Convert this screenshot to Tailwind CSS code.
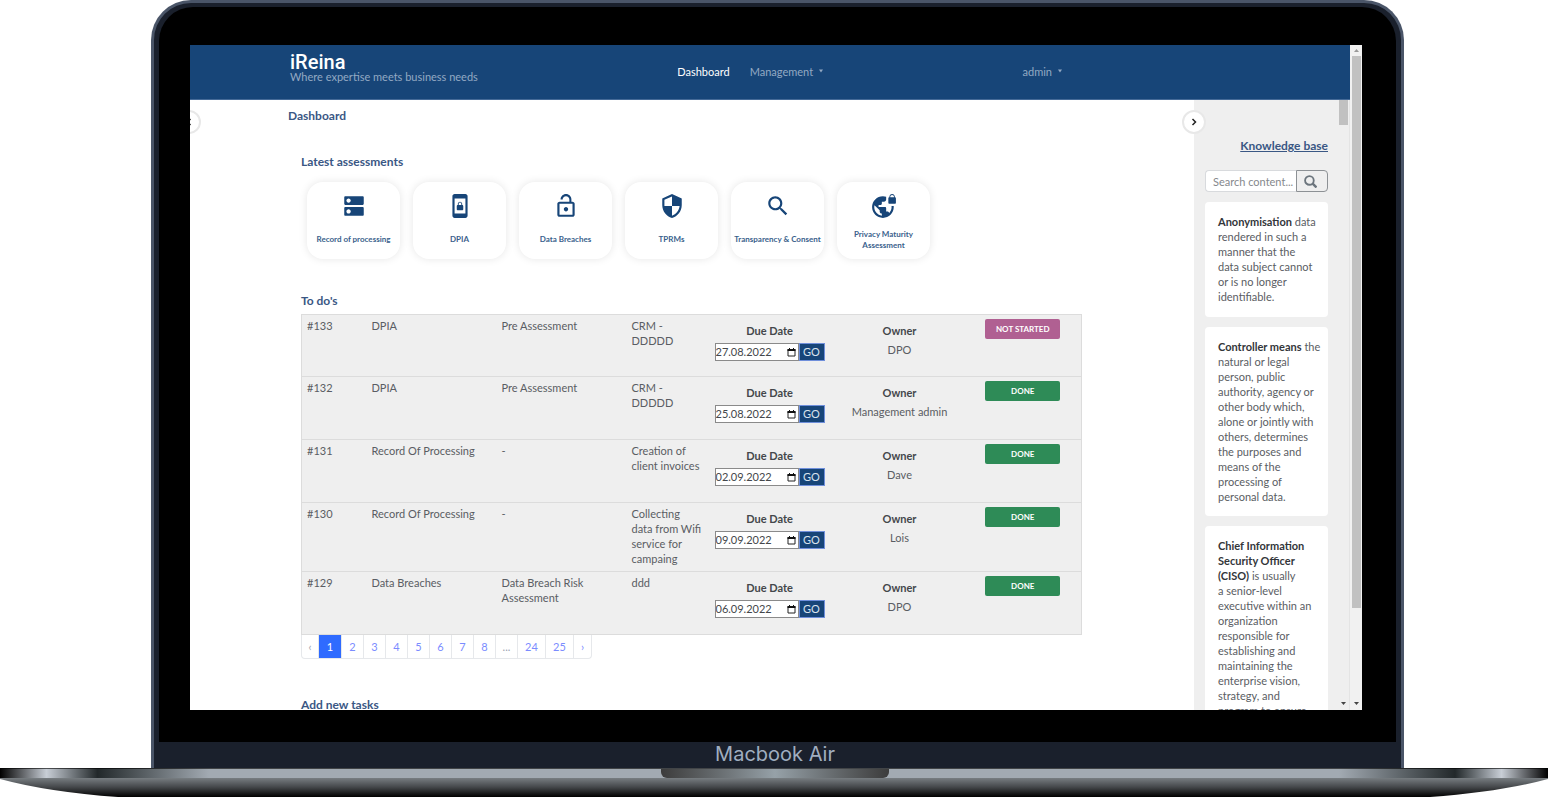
<!DOCTYPE html>
<html lang="en">
<head>
  <meta charset="UTF-8" />
  <meta name="viewport" content="width=device-width, initial-scale=1.0" />
  <title>iReina - Dashboard</title>
  <script src="https://cdn.jsdelivr.net/npm/@tailwindcss/browser@4"></script>
</head>
<body class="h-screen flex flex-col bg-white overflow-hidden font-['Lato',sans-serif] text-[11px] leading-[15px] text-[#5a5d63]">

  <!-- Laptop lid -->
  <div class="flex-1 min-h-0 ml-[151px] mr-[144px] flex flex-col rounded-t-[40px] border-t-3 border-x-3 border-[#4a5568] bg-[#1a202c] overflow-hidden">
    <div class="flex-1 min-h-0 mt-1 mx-[5px] pt-[38px] pb-8 pl-[31px] pr-[34px] flex bg-black rounded-t-[34px]">

      <!-- Screen -->
      <div class="relative flex-1 min-w-0 flex bg-white overflow-hidden">
        <div class="flex-1 min-w-0 flex flex-col">

          <nav class="h-[55px] shrink-0 flex items-center justify-between pl-[100px] pr-[288px] bg-[#174578] border-b border-[#456a97] text-[#93a9c3]">
            <a href="#" class="block pb-2">
              <span class="block font-['Roboto',sans-serif] font-medium text-[20px] leading-[18px] text-white">iReina</span>
              <span class="block leading-3">Where expertise meets business needs</span>
            </a>
            <div class="flex gap-5 pb-0.5">
              <a href="#" class="text-white">Dashboard</a>
              <a href="#" class="flex items-center gap-1.5">Management
                <svg class="w-1 h-1" viewBox="0 0 4 4" fill="currentColor"><path d="M0 0.5h4L2 3.5z"/></svg>
              </a>
            </div>
            <a href="#" class="flex items-center gap-1.5 pb-0.5">admin
              <svg class="w-1 h-1" viewBox="0 0 4 4" fill="currentColor"><path d="M0 0.5h4L2 3.5z"/></svg>
            </a>
          </nav>

          <div class="flex-1 min-h-0 flex">

            <!-- Main column -->
            <main class="relative flex-1 min-w-0 pl-[111px] pr-28 pt-2">
              <button aria-label="Open left panel" class="absolute -left-[13px] top-[10px] size-6 rounded-full border-2 border-[#e8e8e8] bg-white flex items-center justify-center">
                <svg class="w-2 h-2" viewBox="0 0 8 8" fill="none" stroke="#222" stroke-width="1.5"><path d="M5.500 1L2.500 4L5.500 7"/></svg>
              </button>
              <button aria-label="Close right panel" class="absolute -right-3 top-[10px] z-10 size-6 rounded-full border-2 border-[#e8e8e8] bg-white flex items-center justify-center">
                <svg class="w-2 h-2" viewBox="0 0 8 8" fill="none" stroke="#222" stroke-width="1.5"><path d="M2.500 1L5.500 4L2.500 7"/></svg>
              </button>

              <h1 class="-ml-[13px] font-bold text-xs leading-4 text-[#3a5784]">Dashboard</h1>

              <h2 class="mt-[30px] font-bold text-xs leading-4 text-[#3a5784]">Latest assessments</h2>
              <div id="assessments" class="mt-3 ml-1.5 flex gap-[13px]"></div>

              <h2 class="mt-[34px] font-bold text-xs leading-4 text-[#3a5784]">To do's</h2>
              <table class="mt-[5px] w-full table-fixed border-collapse border border-[#dcdcdc] bg-[#efefef]">
                <colgroup>
                  <col class="w-[65px]" />
                  <col class="w-[130px]" />
                  <col class="w-[130px]" />
                  <col class="w-[78px]" />
                  <col class="w-[130px]" />
                  <col class="w-[130px]" />
                  <col />
                </colgroup>
                <tbody id="todos"></tbody>
              </table>

              <div class="flex w-fit h-6 border border-t-0 border-[#e6e8eb] rounded-b-sm divide-x divide-[#e6e8eb] text-[#7b8cff]">
                <a href="#" class="w-[17px] flex items-center justify-center text-gray-400">‹</a>
                <a href="#" class="w-[23px] flex items-center justify-center bg-[#2f6bff] text-white">1</a>
                <a href="#" class="w-[22px] flex items-center justify-center">2</a>
                <a href="#" class="w-[22px] flex items-center justify-center">3</a>
                <a href="#" class="w-[22px] flex items-center justify-center">4</a>
                <a href="#" class="w-[22px] flex items-center justify-center">5</a>
                <a href="#" class="w-[22px] flex items-center justify-center">6</a>
                <a href="#" class="w-[22px] flex items-center justify-center">7</a>
                <a href="#" class="w-[22px] flex items-center justify-center">8</a>
                <span class="w-[22px] flex items-center justify-center text-gray-400">...</span>
                <a href="#" class="w-7 flex items-center justify-center">24</a>
                <a href="#" class="w-7 flex items-center justify-center">25</a>
                <a href="#" class="w-[17px] flex items-center justify-center">›</a>
              </div>

              <h2 class="mt-[38px] font-bold text-xs leading-4 text-[#3a5784]">Add new tasks</h2>
            </main>

            <!-- Knowledge base -->
            <aside class="w-[156px] shrink-0 flex bg-[#efefef]">
              <div class="flex-1 min-w-0 pl-[11px] pr-2.5 overflow-hidden whitespace-nowrap">
                <div class="pt-[38px] text-right">
                  <a href="#" class="font-bold text-xs leading-4 text-[#3a5784] underline">Knowledge base</a>
                </div>
                <form class="mt-4 h-[22px] flex">
                  <input type="text" aria-label="Search content" placeholder="Search content..." class="flex-1 min-w-0 pl-[7px] bg-white border border-[#d8dadd] border-r-0 rounded-l-sm placeholder:text-[#85888c]" />
                  <button type="button" aria-label="Search" class="w-8 pr-1 flex items-center justify-center border border-[#8d9195] rounded-r-[4px]">
                    <svg class="w-[13px] h-[13px]" viewBox="0 0 12 12" fill="none" stroke="#6c757d"><circle cx="5" cy="5" r="4" stroke-width="1.700"/><path d="M8 8l3.500 3.500" stroke-width="2.200"/></svg>
                  </button>
                </form>
                <div class="mt-2.5 flex flex-col gap-2.5">
                  <p class="px-[13px] pt-3 pb-[13px] bg-white rounded-sm">
                    <b class="text-[#33363a]">Anonymisation</b> data<br />rendered in such a<br />manner that the<br />data subject cannot<br />or is no longer<br />identifiable.
                  </p>
                  <p class="px-[13px] py-3 bg-white rounded-sm">
                    <b class="text-[#33363a]">Controller means</b> the<br />natural or legal<br />person, public<br />authority, agency or<br />other body which,<br />alone or jointly with<br />others, determines<br />the purposes and<br />means of the<br />processing of<br />personal data.
                  </p>
                  <p class="px-[13px] py-3 bg-white rounded-sm">
                    <b class="text-[#33363a]">Chief Information<br />Security Officer<br />(CISO)</b> is usually<br />a senior-level<br />executive within an<br />organization<br />responsible for<br />establishing and<br />maintaining the<br />enterprise vision,<br />strategy, and<br />program to ensure
                  </p>
                </div>
              </div>
              <div class="w-3 shrink-0 flex flex-col items-center justify-between border-r border-[#e4e4e4]">
                <div class="w-[9px] h-[25px] bg-[#c1c1c1]"></div>
                <svg class="w-[5px] h-3" viewBox="0 0 5 12" fill="#444"><path d="M0 4h5L2.500 7z"/></svg>
              </div>
            </aside>
          </div>
        </div>

        <!-- Window scrollbar -->
        <div class="w-3 shrink-0 flex flex-col items-center bg-[#f1f1f1]">
          <svg class="w-[5px] h-[11px]" viewBox="0 0 5 11" fill="#999"><path d="M0 7h5L2.500 4z"/></svg>
          <div class="w-[9px] h-[83%] bg-[#c1c1c1]"></div>
          <svg class="mt-auto w-[5px] h-3" viewBox="0 0 5 12" fill="#444"><path d="M0 4h5L2.500 7z"/></svg>
        </div>
      </div>
    </div>
    <div class="h-[26px] shrink-0 pr-[5px] text-center font-['Inter',sans-serif] text-xl leading-6 text-[#a0aec0]">Macbook Air</div>
  </div>

  <!-- Laptop base -->
  <div class="relative h-[29px] mb-[5px] shrink-0">
    <svg class="w-full h-full" viewBox="0 0 1548 29" preserveAspectRatio="none">
      <defs>
        <linearGradient id="edge">
          <stop offset="0" stop-color="#000"/>
          <stop offset="0.03" stop-color="#c8ced6"/>
          <stop offset="0.063" stop-color="#22282a"/>
          <stop offset="0.135" stop-color="#a2aab2"/>
          <stop offset="0.865" stop-color="#a2aab2"/>
          <stop offset="0.94" stop-color="#22282a"/>
          <stop offset="0.97" stop-color="#c8ced6"/>
          <stop offset="1" stop-color="#000"/>
        </linearGradient>
        <linearGradient id="under" x1="0" y1="0" x2="0" y2="1">
          <stop offset="0" stop-color="#7d8387"/>
          <stop offset="0.5" stop-color="#45484b"/>
          <stop offset="1" stop-color="#000"/>
        </linearGradient>
      </defs>
      <path d="M0 9H1548V11Q1500 24 1430 29H118Q48 24 0 11Z" fill="url(#under)"/>
      <rect width="1548" height="10" fill="url(#edge)"/>
      <rect width="1548" height="1" fill="#000" fill-opacity="0.600"/>
    </svg>
    <div class="absolute top-px left-[661px] right-[659px] h-[9px] rounded-b-md bg-linear-to-r from-[#3c3c3c] via-[#96a1a8] to-[#3c3c3c]"></div>
  </div>

  <script>
    const assessments = [
      ["Record of processing", "M20 13H4c-.55 0-1 .45-1 1v6c0 .55.45 1 1 1h16c.55 0 1-.45 1-1v-6c0-.55-.45-1-1-1zM7 19c-1.100 0-2-.9-2-2s.9-2 2-2 2 .9 2 2-.9 2-2 2zM20 3H4c-.55 0-1 .45-1 1v6c0 .55.45 1 1 1h16c.55 0 1-.45 1-1V4c0-.55-.45-1-1-1zM7 9c-1.100 0-2-.9-2-2s.9-2 2-2 2 .9 2 2-.9 2-2 2z"],
      ["DPIA", "M10 16h4c.55 0 1-.45 1-1v-3c0-.55-.45-1-1-1v-1c0-1.110-.9-2-2-2-1.110 0-2 .9-2 2v1c-.55 0-1 .45-1 1v3c0 .55.45 1 1 1zm.8-6c0-.66.54-1.200 1.200-1.200.66 0 1.200.54 1.200 1.200v1h-2.400v-1zM17 1H7c-1.100 0-2 .9-2 2v18c0 1.100.9 2 2 2h10c1.100 0 2-.9 2-2V3c0-1.100-.9-2-2-2zm0 18H7V5h10v14z"],
      ["Data Breaches", "M12 17c1.100 0 2-.9 2-2s-.9-2-2-2-2 .9-2 2 .9 2 2 2zm6-9h-1V6c0-2.760-2.240-5-5-5S7 3.240 7 6h1.900c0-1.710 1.390-3.100 3.100-3.100 1.710 0 3.100 1.390 3.100 3.100v2H6c-1.100 0-2 .9-2 2v10c0 1.100.9 2 2 2h12c1.100 0 2-.9 2-2V10c0-1.100-.9-2-2-2zm0 12H6V10h12v10z"],
      ["TPRMs", "M12 1L3 5v6c0 5.550 3.840 10.740 9 12 5.160-1.260 9-6.450 9-12V5l-9-4zm0 10.990h7c-.53 4.120-3.280 7.790-7 8.940V12H5V6.300l7-3.110v8.800z"],
      ["Transparency & Consent", "M15.500 14h-.79l-.28-.27C15.410 12.590 16 11.110 16 9.500 16 5.910 13.090 3 9.500 3S3 5.910 3 9.500 5.910 16 9.500 16c1.610 0 3.090-.59 4.230-1.570l.27.28v.79l5 4.990L20.490 19l-4.990-5zm-6 0C7.010 14 5 11.990 5 9.500S7.010 5 9.500 5 14 7.010 14 9.500 11.990 14 9.500 14z"],
      ["Privacy Maturity<br>Assessment", "M22 4v-.5C22 2.120 20.880 1 19.500 1S17 2.120 17 3.500V4c-.55 0-1 .45-1 1v4c0 .55.45 1 1 1h5c.55 0 1-.45 1-1V5c0-.55-.45-1-1-1zm-.8 0h-3.400v-.5c0-.94.76-1.700 1.700-1.700s1.700.76 1.700 1.700V4zm-2.280 8c.04.33.08.66.08 1 0 2.080-.8 3.970-2.100 5.390-.26-.81-1-1.390-1.900-1.390h-1v-3c0-.55-.45-1-1-1H7v-2h2c.55 0 1-.45 1-1V8h2c1.100 0 2-.9 2-2V3.460c-.95-.3-1.950-.46-3-.46C5.480 3 1 7.480 1 13s4.480 10 10 10 10-4.480 10-10c0-.34-.02-.67-.05-1h-2.030zM10 20.930c-3.950-.49-7-3.850-7-7.930 0-.62.08-1.210.21-1.790L8 16v1c0 1.100.9 2 2 2v1.930z"]
    ];

    const todos = [
      ["133", "DPIA", "Pre Assessment", "CRM -<br>DDDDD", "27.08.2022", "DPO", "NOT STARTED"],
      ["132", "DPIA", "Pre Assessment", "CRM -<br>DDDDD", "25.08.2022", "Management admin", "DONE"],
      ["131", "Record Of Processing", "-", "Creation of<br>client invoices", "02.09.2022", "Dave", "DONE"],
      ["130", "Record Of Processing", "-", "Collecting<br>data from Wifi<br>service for<br>campaing", "09.09.2022", "Lois", "DONE"],
      ["129", "Data Breaches", "Data Breach Risk<br>Assessment", "ddd", "06.09.2022", "DPO", "DONE"]
    ];

    document.getElementById("assessments").innerHTML = assessments.map(([label, icon]) => `
      <a href="#" class="w-[93px] h-[77px] pt-[11px] flex flex-col items-center rounded-2xl bg-white shadow-[0_0_8px_rgba(0,0,0,0.1)] text-[#3a5f8c]">
        <svg class="size-[26px] shrink-0" viewBox="0 0 24 24" fill="#174578"><path d="${icon}"/></svg>
        <span class="mt-px h-11 flex items-center text-center text-[8px] leading-[11px] font-bold whitespace-nowrap">${label}</span>
      </a>`).join("");

    document.getElementById("todos").innerHTML = todos.map(([id, type, stage, name, date, owner, status]) => `
      <tr class="h-[63px] first:h-[62px] align-top border-b border-[#dcdcdc]">
        <td class="pl-[5px] pt-[3px] pb-[5px]">#${id}</td>
        <td class="pl-[5px] pt-[3px] pb-[5px]">${type}</td>
        <td class="pl-[5px] pt-[3px] pb-[5px]">${stage}</td>
        <td class="pl-[5px] pt-[3px] pb-[5px] whitespace-nowrap">${name}</td>
        <td class="pt-2 px-2.5">
          <label for="due-${id}" class="block text-center font-bold text-[#44474b]">Due Date</label>
          <div class="mt-[5px] h-[18px] flex">
            <div class="flex-1 min-w-0 flex items-center pr-0.5 bg-white border border-[#8a8a8a]">
              <input id="due-${id}" type="text" value="${date}" class="flex-1 min-w-0 h-4 pb-px text-[#44474b]" />
              <svg class="w-[9px] h-[9px] shrink-0" viewBox="0 0 9 9"><path d="M1 1.500h7v6.500H1z" fill="none" stroke="#222"/><path d="M0.500 1h8v2h-8zM2 0h1v1H2zM6 0h1v1H6z" fill="#111"/></svg>
            </div>
            <button class="w-[26px] bg-[#174578] border border-[#6f8fdb] text-[#d9e2ee] leading-4">GO</button>
          </div>
        </td>
        <td class="pt-2 text-center">
          <div class="font-bold text-[#44474b]">Owner</div>
          <div class="mt-1">${owner}</div>
        </td>
        <td class="pt-1 text-center">
          <span class="inline-block w-[75px] h-5 rounded-xs text-[8px] leading-5 font-bold text-white ${status === "DONE" ? "bg-[#2e8b57]" : "bg-[#b06092]"}">${status}</span>
        </td>
      </tr>`).join("");
  </script>

</body>
</html>
